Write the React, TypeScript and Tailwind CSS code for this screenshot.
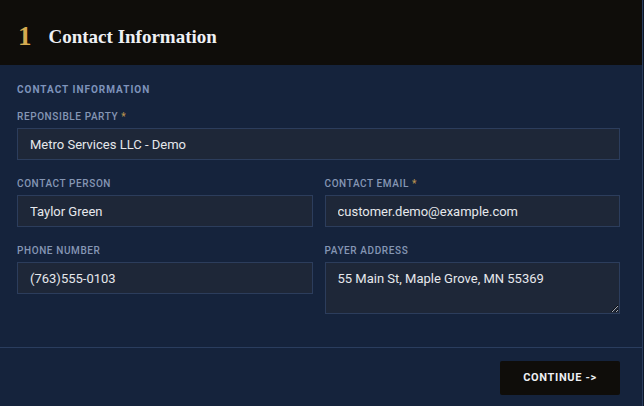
import React from 'react'

const labelCls =
  "block text-[10px] leading-[12px] mb-[5px] uppercase tracking-[0.06em] text-[#8596b4] font-medium"
const inputCls =
  "w-full h-[32px] px-[12px] bg-[#1e2738] border border-[#2c3d5c] text-[13px] text-[#e6e8ec] outline-none"

function Field({ label, required, value }: { label: string; required?: boolean; value: string }) {
  return (
    <div>
      <label className={labelCls}>
        {label}
        {required && <span className="ml-[3px] text-[#b8914f]">*</span>}
      </label>
      <input className={inputCls} defaultValue={value} />
    </div>
  )
}

export default function App() {
  return (
    <div
      className="w-[644px] h-[406px] bg-[#0c1626]"
      style={{ fontFamily: 'Roboto, "Open Sans", sans-serif' }}
    >
      <div className="w-[643px] h-full flex flex-col border-r border-[#2a3d5e] bg-[#15233c]">
        {/* header */}
        <div className="h-[65px] bg-[#0f0d0a] flex items-center pl-[18px] pt-[8px] gap-[17px]">
          <span
            className="text-[27px] font-bold text-[#d4aa50] leading-none"
            style={{ fontFamily: '"Liberation Serif", serif' }}
          >
            1
          </span>
          <span
            className="text-[19px] font-bold text-[#eef0f4] leading-none"
            style={{ fontFamily: '"Liberation Serif", serif' }}
          >
            Contact Information
          </span>
        </div>

        {/* body */}
        <div className="pl-[17px] pr-[22px] pt-[20px] pb-[33px] flex flex-col">
          <h3 className="text-[10px] leading-[10px] font-bold uppercase tracking-[0.1em] text-[#7e93bb] mb-[16px]">
            Contact Information
          </h3>
          <div className="mb-[18px]">
            <Field label="Reponsible Party" required value="Metro Services LLC - Demo" />
          </div>
          <div className="grid grid-cols-2 gap-x-[12px] gap-y-[18px]">
            <Field label="Contact Person" value="Taylor Green" />
            <Field label="Contact Email" required value="customer.demo@example.com" />
            <Field label="Phone Number" value="(763)555-0103" />
            <div>
              <label className={labelCls}>Payer Address</label>
              <textarea
                className="block w-full h-[52px] px-[12px] pt-[8px] bg-[#1e2738] border border-[#2c3d5c] text-[13px] leading-[16px] text-[#e6e8ec] outline-none resize-y"
                defaultValue="55 Main St, Maple Grove, MN 55369"
              />
            </div>
          </div>
        </div>

        {/* footer */}
        <div className="border-t border-[#2a3d5e] flex justify-end pr-[22px] pt-[13px]">
          <button className="w-[120px] h-[34px] bg-[#0f0d0a] rounded-[2px] text-[11px] font-bold tracking-[0.06em] text-[#eef0f4]">
            CONTINUE -&gt;
          </button>
        </div>
      </div>
    </div>
  )
}
